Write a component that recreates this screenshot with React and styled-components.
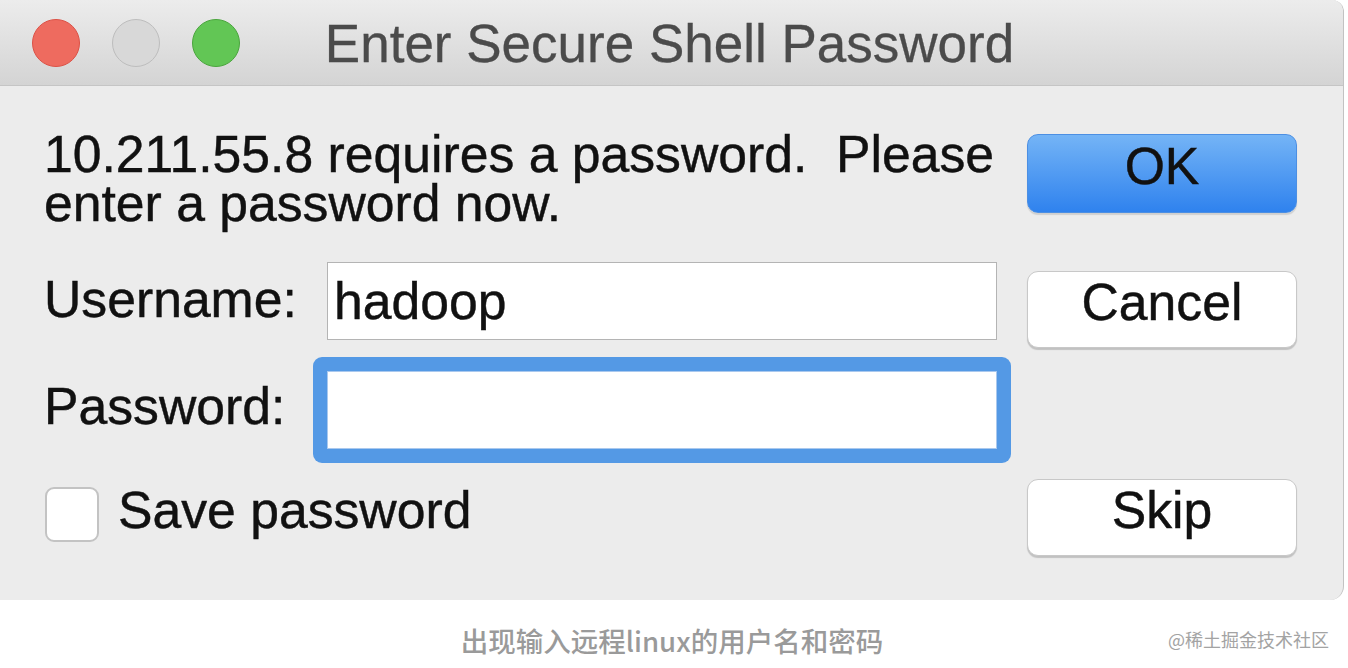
import styled, { createGlobalStyle } from "styled-components";

const GlobalStyle = createGlobalStyle`
  html, body {
    margin: 0;
    padding: 0;
    background: #ffffff;
  }
  body {
    font-family: "Liberation Sans", Arial, sans-serif;
    overflow: hidden;
  }
`;

const Page = styled.div`
  width: 1348px;
  height: 668px;
  position: relative;
  background: #ffffff;
`;

const Window = styled.div`
  width: 1344px;
  height: 600px;
  box-sizing: border-box;
  background: #ececec;
  border-right: 1px solid #c2c2c2;
  border-radius: 0 12px 14px 0;
  overflow: hidden;
  display: flex;
  flex-direction: column;
`;

const TitleBar = styled.div`
  height: 85px;
  flex-shrink: 0;
  display: grid;
  grid-template-columns: 1fr auto 1fr;
  align-items: center;
  background: linear-gradient(#ececec, #d4d4d4);
  border-bottom: 1px solid #c5c5c5;
`;

const Lights = styled.div`
  display: flex;
  gap: 32px;
  padding-left: 32px;
`;

const Light = styled.span`
  width: 48px;
  height: 48px;
  box-sizing: border-box;
  border-radius: 50%;
  background: ${(p) => p.$fill};
  border: 1px solid ${(p) => p.$edge};
`;

const Title = styled.div`
  font-size: 53px;
  color: #4b4b4b;
  line-height: 1;
  padding-top: 2px;
  margin-left: -4px;
  -webkit-text-stroke: 0.3px #4b4b4b;
`;

const Body = styled.div`
  display: flex;
  padding: 44px 46px 0 44px;
  color: #111;
  font-size: 51.7px;
  -webkit-text-stroke: 0.45px #111;
`;

const Main = styled.div`
  width: 967px;
  display: flex;
  flex-direction: column;
`;

const Message = styled.p`
  margin: 0;
  line-height: 49px;
  white-space: pre;
`;

const FieldRow = styled.div`
  display: flex;
  align-items: center;
  margin-top: ${(p) => p.$gap}px;
`;

const Label = styled.label`
  width: 283px;
  flex-shrink: 0;
  line-height: 57px;
  margin-bottom: ${(p) => p.$lift}px;
`;

const TextBox = styled.div`
  width: 670px;
  height: 78px;
  box-sizing: border-box;
  background: #fff;
  border: 1px solid ${(p) => (p.$focused ? "#a9c8ee" : "#b4b4b4")};
  padding-left: 6px;
  display: flex;
  align-items: center;
  line-height: 57px;
`;

const FocusRing = styled.div`
  margin: -14px;
  padding: 14px;
  border-radius: 9px;
  background: #5499e5;
`;

const CheckRow = styled.div`
  display: flex;
  align-items: center;
  margin-top: 37px;
  margin-left: 1px;
`;

const CheckBox = styled.span`
  width: 54px;
  height: 55px;
  box-sizing: border-box;
  border: 2px solid #c3c3c3;
  border-radius: 9px;
  background: #fff;
  margin-right: 19px;
`;

const CheckLabel = styled.span`
  line-height: 57px;
  margin: -4px 0 4px;
`;

const Side = styled.div`
  display: flex;
  flex-direction: column;
  margin-left: 16px;
`;

const Button = styled.div`
  width: 270px;
  height: ${(p) => p.$h}px;
  margin-top: ${(p) => p.$gap}px;
  box-sizing: border-box;
  padding-bottom: 16px;
  border-radius: 11px;
  display: flex;
  align-items: center;
  justify-content: center;
  color: #111;
  background: ${(p) =>
    p.$primary ? "linear-gradient(#74b4f6, #2f82ee)" : "#ffffff"};
  border: 1px solid ${(p) => (p.$primary ? "#4c8fe3" : "#c8c8c8")};
  box-shadow: 0 2px 1px rgba(0, 0, 0, ${(p) => (p.$primary ? 0.12 : 0.18)});
`;

const Footer = styled.div`
  height: 68px;
  box-sizing: border-box;
  display: flex;
  justify-content: center;
  align-items: center;
  padding-top: 12px;
`;

const Caption = styled.div`
  font-family: "Noto Sans CJK SC", sans-serif;
  font-size: 27.5px;
  font-weight: 500;
  color: #9a9a9a;
  margin-left: -4px;
`;

const Watermark = styled.div`
  position: absolute;
  right: 19px;
  bottom: 16px;
  font-family: "Noto Sans CJK SC", sans-serif;
  font-size: 18px;
  color: #a3a3a3;
`;

export default function App() {
  return (
    <Page>
      <GlobalStyle />
      <Window>
        <TitleBar>
          <Lights>
            <Light $fill="#ee6b5f" $edge="#dc5146" />
            <Light $fill="#d8d8d8" $edge="#bdbdbd" />
            <Light $fill="#62c655" $edge="#4aa53d" />
          </Lights>
          <Title>Enter Secure Shell Password</Title>
          <span />
        </TitleBar>
        <Body>
          <Main>
            <Message>
              {"10.211.55.8 requires a password.  Please\nenter a password now."}
            </Message>
            <FieldRow $gap={34}>
              <Label $lift={4}>Username:</Label>
              <TextBox>hadoop</TextBox>
            </FieldRow>
            <FieldRow $gap={31}>
              <Label $lift={8}>Password:</Label>
              <FocusRing>
                <TextBox $focused />
              </FocusRing>
            </FieldRow>
            <CheckRow>
              <CheckBox />
              <CheckLabel>Save password</CheckLabel>
            </CheckRow>
          </Main>
          <Side>
            <Button $primary $h={79} $gap={4}>
              OK
            </Button>
            <Button $h={77} $gap={58}>
              Cancel
            </Button>
            <Button $h={77} $gap={131}>
              Skip
            </Button>
          </Side>
        </Body>
      </Window>
      <Footer>
        <Caption>出现输入远程linux的用户名和密码</Caption>
      </Footer>
      <Watermark>@稀土掘金技术社区</Watermark>
    </Page>
  );
}
